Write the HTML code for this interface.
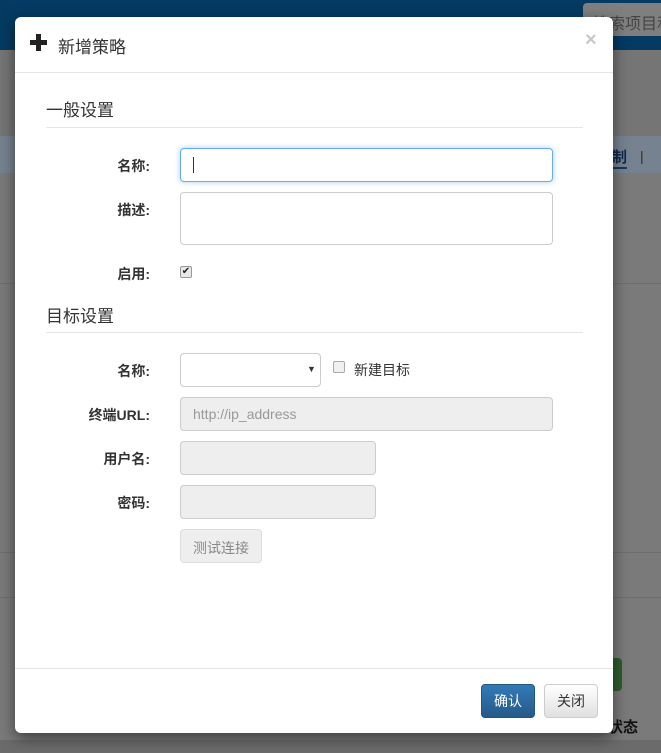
<!DOCTYPE html>
<html><head><meta charset="utf-8"><style>
*{box-sizing:border-box;margin:0;padding:0}
body{width:661px;height:753px;overflow:hidden;position:relative;background:#7a7a7a;font-family:"Liberation Sans","Noto Sans CJK SC",sans-serif;font-size:14px;color:#333}
.a{position:absolute}
.modal{left:15px;top:17px;width:598px;height:716px;background:#fff;border-radius:6px;box-shadow:0 5px 15px rgba(0,0,0,.5)}
.lbl{font-weight:bold;text-align:right;width:120px;left:30px;color:#333}
.inp{border:1px solid #ccc;border-radius:4px;background:#fff}
.dis{background:#eee;border:1px solid #ccc;border-radius:4px}
.h{font-size:17px;color:#333;left:46px}
.hr{left:46px;width:537px;height:1px;background:#e5e5e5}
</style></head><body>
<div class="a" style="left:0;top:0;width:661px;height:50px;background:#053a62"></div>
<div class="a" style="left:583px;top:3px;width:90px;height:33px;background:#7f7f7f;border-radius:4px;color:#444;font-size:16px;padding:7px 10px;overflow:hidden;white-space:nowrap">搜索项目和</div>
<div class="a" style="left:0;top:50px;width:661px;height:86px;background:#757575"></div>
<div class="a" style="left:0;top:136px;width:661px;height:37px;background:#76828f"></div>
<div class="a" style="left:612px;top:146px;font-weight:bold;color:#102a4a;font-size:15px;border-bottom:2px solid #153a66">制</div>
<div class="a" style="left:640px;top:148px;color:#3a2a10">|</div>
<div class="a" style="left:0;top:283px;width:661px;height:1px;background:#6e6e6e"></div>
<div class="a" style="left:0;top:552px;width:661px;height:1px;background:#6e6e6e"></div>
<div class="a" style="left:0;top:597px;width:661px;height:1px;background:#6e6e6e"></div>
<div class="a" style="left:600px;top:658px;width:22px;height:33px;background:#2d5e2d;border-radius:4px"></div>
<div class="a" style="left:608px;top:716px;font-weight:bold;color:#111;font-size:15px">状态</div>
<div class="a" style="left:0;top:740px;width:661px;height:13px;background:#6b6b6b"></div>

<div class="a modal">
  <div class="a" style="left:15px;top:17px;width:17px;height:17px">
    <div class="a" style="left:6px;top:0;width:5px;height:17px;background:#222"></div>
    <div class="a" style="left:0;top:6px;width:17px;height:5px;background:#222"></div>
  </div>
  <div class="a" style="left:43px;top:16px;font-size:17px;color:#333">新增策略</div>
  <div class="a" style="left:570px;top:12px;font-size:20px;font-weight:bold;color:#c8c8c8">×</div>
  <div class="a" style="left:0;top:55px;width:598px;height:1px;background:#e5e5e5"></div>
</div>
<div class="a h" style="top:96px">一般设置</div>
<div class="a hr" style="top:127px"></div>
<div class="a lbl" style="top:156px">名称:</div>
<div class="a inp" style="left:180px;top:148px;width:373px;height:34px;border-color:#66afe9;box-shadow:0 0 6px rgba(102,175,233,.6)"><div class="a" style="left:12px;top:8px;width:1px;height:16px;background:#333"></div></div>
<div class="a lbl" style="top:200px">描述:</div>
<div class="a inp" style="left:180px;top:192px;width:373px;height:53px"></div>
<div class="a lbl" style="top:264px">启用:</div>
<div class="a" style="left:180px;top:266px;width:12px;height:12px;border:1px solid #999;border-radius:2px;background:#e8e8e8;font-size:10px;line-height:10px;text-align:center;color:#222">✔</div>
<div class="a h" style="top:302px">目标设置</div>
<div class="a hr" style="top:332px"></div>
<div class="a lbl" style="top:361px">名称:</div>
<div class="a inp" style="left:180px;top:353px;width:141px;height:34px"><div class="a" style="left:126px;top:10px;font-size:9px;color:#333">▼</div></div>
<div class="a" style="left:333px;top:361px;width:12px;height:12px;border:1px solid #aaa;border-radius:2px;background:#f0f0f0"></div>
<div class="a" style="left:354px;top:360px;color:#333">新建目标</div>
<div class="a lbl" style="top:405px">终端URL:</div>
<div class="a dis" style="left:180px;top:397px;width:373px;height:34px;color:#999;padding:8px 12px">http://ip_address</div>
<div class="a lbl" style="top:449px">用户名:</div>
<div class="a dis" style="left:180px;top:441px;width:196px;height:34px"></div>
<div class="a lbl" style="top:493px">密码:</div>
<div class="a dis" style="left:180px;top:485px;width:196px;height:34px"></div>
<div class="a dis" style="left:180px;top:529px;width:82px;height:34px;color:#888;padding:8px 12px;border-color:#ddd">测试连接</div>
<div class="a" style="left:15px;top:668px;width:598px;height:1px;background:#e5e5e5"></div>
<div class="a" style="left:481px;top:684px;width:54px;height:34px;background:linear-gradient(#337ab7,#265a88);border:1px solid #245580;border-radius:4px;color:#fff;text-align:center;line-height:32px">确认</div>
<div class="a" style="left:544px;top:684px;width:54px;height:34px;background:linear-gradient(#fff,#e0e0e0);border:1px solid #ccc;border-radius:4px;color:#333;text-align:center;line-height:32px">关闭</div>
</body></html>
